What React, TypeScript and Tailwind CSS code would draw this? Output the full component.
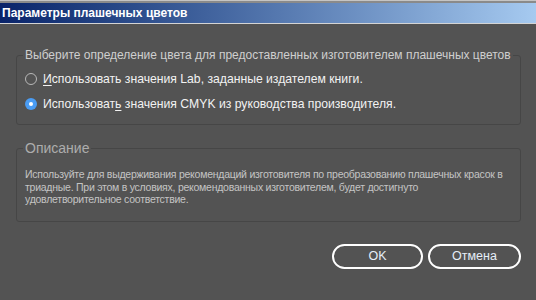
const font = { fontFamily: '"Liberation Sans", Arial, sans-serif' };

function Radio({ checked }: { checked?: boolean }) {
  if (checked) {
    return (
      <span className="flex h-[12px] w-[12px] items-center justify-center rounded-full bg-[#4a9cf3]">
        <span className="h-[4px] w-[4px] rounded-full bg-white" />
      </span>
    );
  }
  return <span className="h-[12px] w-[12px] rounded-full border border-[#b8b8b8]" />;
}

export default function App() {
  return (
    <div
      className="flex h-[300px] w-[536px] flex-col overflow-hidden bg-[#535353]"
      style={font}
    >
      <div className="h-[3px] border-t border-[#c4c4c4] bg-[#8a8a8a]" />
      <div className="flex h-[20px] items-center bg-gradient-to-r from-[#0a246a] to-[#a6caf0] pl-[2px] text-[12px] font-bold text-white">
        Параметры плашечных цветов
      </div>
      <div className="h-px bg-[#d4d4d4]" />

      <div className="flex flex-col px-[16px] pr-[15px]">
        <fieldset className="mt-[24px] h-[77px] rounded-[3px] border border-[#464646]">
          <legend className="ml-[6px] whitespace-nowrap px-[2px] text-[12px] leading-[14px] text-[#cfcfcf]">
            Выберите определение цвета для предоставленных изготовителем плашечных цветов
          </legend>
          <div className="mt-[10px] flex flex-col gap-[11px] pl-[8px] text-[12.2px] leading-[14px] text-[#f2f2f2]">
            <label className="flex items-center gap-[6px]">
              <Radio />
              <span>
                <span className="underline underline-offset-2">И</span>спользовать значения Lab, заданные
                издателем книги.
              </span>
            </label>
            <label className="flex items-center gap-[6px]">
              <Radio checked />
              <span>
                Использоват<span className="underline underline-offset-2">ь</span> значения CMYK из
                руководства производителя.
              </span>
            </label>
          </div>
        </fieldset>

        <fieldset className="mt-[15px] h-[82px] rounded-[3px] border border-[#464646]">
          <legend className="ml-[6px] px-[2px] text-[14px] leading-[16px] text-[#adadad]">
            Описание
          </legend>
          <p className="mt-[12px] whitespace-nowrap pl-[8px] text-[10.5px] leading-[12.5px] tracking-[-0.25px] text-[#c4c4c4]">
            Используйте для выдерживания рекомендаций изготовителя по преобразованию плашечных красок в
            <br />
            триадные. При этом в условиях, рекомендованных изготовителем, будет достигнуто
            <br />
            удовлетворительное соответствие.
          </p>
        </fieldset>

        <div className="mt-[22px] flex justify-end gap-[5px]">
          <button className="h-[25px] w-[91px] rounded-full border-2 border-white text-[12.5px] text-[#e6eef8]">
            OK
          </button>
          <button className="h-[25px] w-[93px] rounded-full border-2 border-white text-[12.5px] text-[#e6eef8]">
            Отмена
          </button>
        </div>
      </div>
    </div>
  );
}
